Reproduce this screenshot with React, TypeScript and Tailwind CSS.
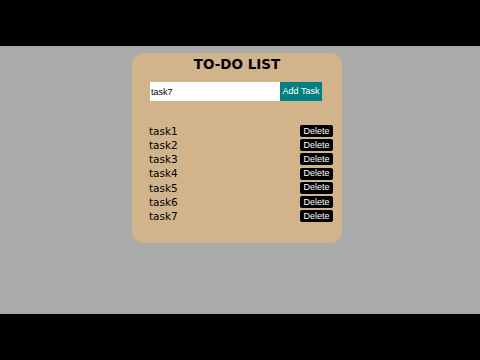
import React, { useState } from 'react';

const App: React.FC = () => {
    const [tasks] = useState(['task1', 'task2', 'task3', 'task4', 'task5', 'task6', 'task7']);
    const [value, setValue] = useState('task7');

    return (
        <div className="w-[480px] h-[360px] bg-black flex flex-col">
            <div className="h-[46px] bg-black" />
            <div className="h-[268px] bg-[#aaaaaa] pt-[7px]">
                <div
                    className="ml-[132px] w-[210px] h-[190px] rounded-[12px] bg-[#d2b48c] flex flex-col"
                    style={{ fontFamily: '"Comic Sans MS", "DejaVu Sans", sans-serif' }}
                >
                    <h1 className="text-center text-[13.5px] font-bold leading-[20px] text-black mt-[1px]">
                        TO-DO LIST
                    </h1>

                    <div className="flex mt-[8px] ml-[18px]">
                        <input
                            value={value}
                            onChange={(e) => setValue(e.target.value)}
                            className="w-[130px] h-[19px] bg-white px-[1px] text-[9px] text-black outline-none"
                            style={{ fontFamily: '"Liberation Sans", Arial, sans-serif' }}
                        />
                        <button
                            className="w-[42px] h-[19px] bg-[#008080] text-white text-[9px] px-0 whitespace-nowrap"
                            style={{ fontFamily: '"Liberation Sans", Arial, sans-serif' }}
                        >
                            Add Task
                        </button>
                    </div>

                    {/* task list */}
                    <ul className="mt-[23px] ml-[17px] mr-[9px] flex flex-col">
                        {tasks.map((t) => (
                            <li key={t} className="h-[14.2px] flex items-center justify-between">
                                <span className="text-[10.5px] text-black leading-none">{t}</span>
                                <button
                                    className="w-[33px] h-[12px] bg-black text-white text-[9px] leading-none rounded-[2px]"
                                    style={{ fontFamily: '"Liberation Sans", Arial, sans-serif' }}
                                >
                                    Delete
                                </button>
                            </li>
                        ))}
                    </ul>
                </div>
            </div>
            <div className="flex-1 bg-black" />
        </div>
    );
};

export default App;
